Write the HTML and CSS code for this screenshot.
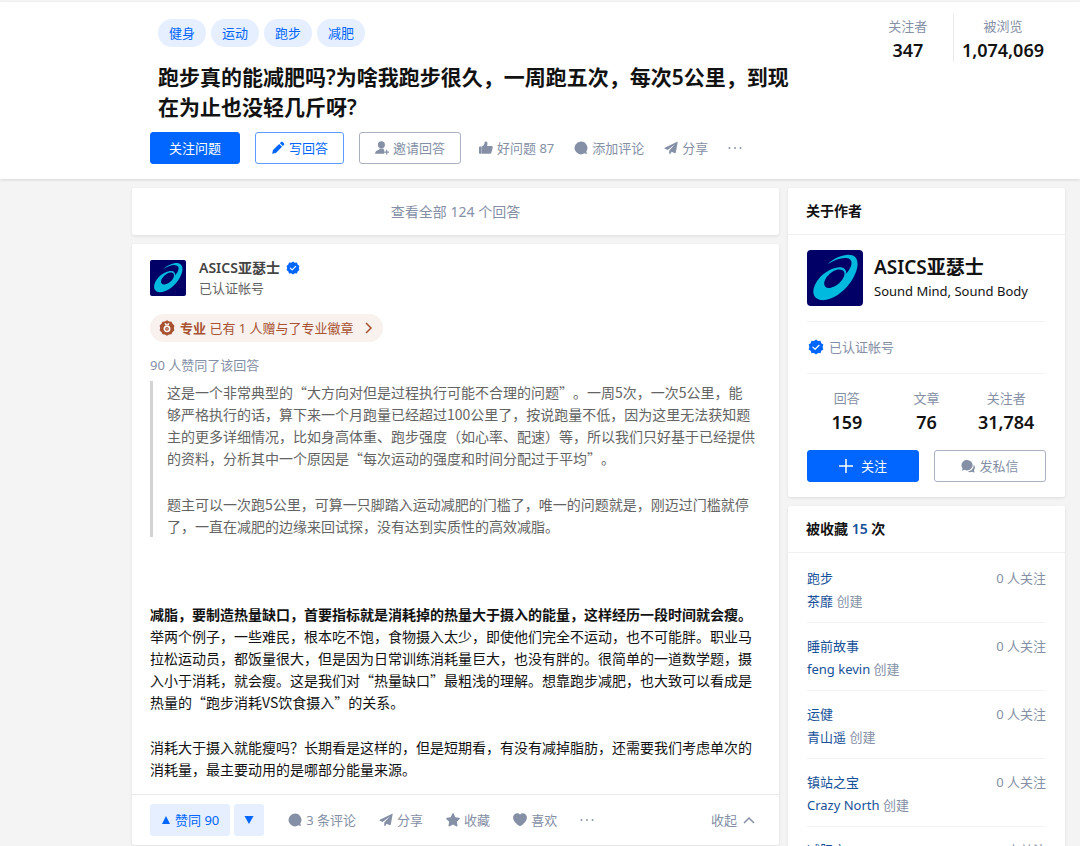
FILE: index.html
```html
<!DOCTYPE html>
<html lang="zh-CN">
<head>
<meta charset="utf-8">
<meta name="viewport" content="width=device-width, initial-scale=1">
<title>跑步真的能减肥吗?</title>
<link rel="stylesheet" href="styles.css">
</head>
<body>
<svg class="sprite" aria-hidden="true">
  <symbol id="comment" viewBox="0 0 24 24"><path d="M12 1a11 11 0 1 0 6 20.200c1.200.8 2.700 1 4 .6.600-.2.600-.7.200-1.100-.8-.8-1.100-1.700-1-2.700A11 11 0 0 0 12 1z"/></symbol>
  <symbol id="plane" viewBox="0 0 24 24"><path d="M22.600 1.200c.5-.3 1 .1.900.6l-3.400 18.500c-.1.700-.8 1-1.400.7l-5.500-2.600-2.700 3.700c-.5.700-1.500.4-1.500-.5v-5.200L18.500 6.200 6.300 15.300l-4.800-2.200c-.8-.3-.8-1.200-.1-1.600z"/></symbol>
  <symbol id="verified" viewBox="0 0 24 24"><path fill="#06f" d="M12 .8l3 2.100 3.700-.2 1.300 3.500 3 2.200L21.900 12l1.100 3.600-3 2.200-1.300 3.500-3.700-.2-3 2.100-3-2.100-3.700.2L4 17.800l-3-2.200L2.100 12 1 8.400l3-2.200 1.300-3.500 3.700.2z"/><path d="M7.300 12.200l3.300 3.200 6-6" fill="none" stroke="#fff" stroke-width="1.800" stroke-linecap="round" stroke-linejoin="round"/></symbol>
  <symbol id="asics" viewBox="0 0 168 168"><path fill="#000067" d="M0 0h168v168H0z"/><path fill="#00b9de" d="M62 42C84 22 116 10 136 16c24 9 19 45-5 80-25 36-62 58-90 54-29-5-29-38-2-68 23-25 62-38 74-25 5 6 6 10 3 16 22-24 24-46 3-49-18-2-38 7-57 18z"/><ellipse cx="82" cy="86" rx="36" ry="20" transform="rotate(-40 82 86)" fill="#000067"/></symbol>
</svg>
<div class="page">
  <header class="question">
    <div class="question-main">
      <nav class="tags"><a href="#">健身</a><a href="#">运动</a><a href="#">跑步</a><a href="#">减肥</a></nav>
      <h1>跑步真的能减肥吗?为啥我跑步很久，一周跑五次，每次5公里，到现在为止也没轻几斤呀?</h1>
      <div class="question-actions">
        <button class="btn primary">关注问题</button>
        <button class="btn outline"><svg class="icon" viewBox="0 0 24 24"><path d="M2 22l1.400-6.500L14 5l5 5L8.500 20.600zM15.300 3.700l1.900-1.900c.8-.8 2-.8 2.800 0l2.200 2.200c.8.8.8 2 0 2.800l-1.900 1.900z"/></svg>写回答</button>
        <button class="btn neutral"><svg class="icon" viewBox="0 0 24 24"><circle cx="11" cy="6.500" r="6"/><path d="M1 22c-.6 0-1-.5-.9-1.100C.8 17.500 3 16.500 6 15.400c1.300-.5 1.700-1.200 1.700-2.400h6.600c0 1.200.4 1.900 1.500 2.400v6.600zM19 15h2v3h3v2h-3v3h-2v-3h-3v-2h3z"/></svg>邀请回答</button>
        <div class="links">
          <button class="link"><svg class="icon" viewBox="0 0 24 24"><path d="M0 11c0-1 .7-1.700 1.700-1.700H4.500V22H1.700C.7 22 0 21.300 0 20.300zM5 9.300C8 8.300 9.500 6 9.500 3c0-3 4.500-3 5 .5.200 1.800-.2 3.500-.7 5h7.200c2 0 3 1.300 2.500 3.200l-2.300 8.300c-.4 1.300-1.200 2-2.500 2H5z"/></svg>好问题 87</button>
          <button class="link"><svg class="icon"><use href="#comment"/></svg>添加评论</button>
          <button class="link"><svg class="icon"><use href="#plane"/></svg>分享</button>
          <button class="link" aria-label="更多"><svg class="icon" viewBox="0 0 24 24"><circle cx="2.500" cy="12" r="1.600"/><circle cx="12" cy="12" r="1.600"/><circle cx="21.500" cy="12" r="1.600"/></svg></button>
        </div>
      </div>
    </div>
    <div class="numbers">
      <div class="number"><span>关注者</span><strong>347</strong></div>
      <div class="number"><span>被浏览</span><strong>1,074,069</strong></div>
    </div>
  </header>

  <div class="columns">
    <main class="stack">
      <a class="card view-all" href="#">查看全部 124 个回答</a>
      <article class="card answer">
        <div class="answer-body">
          <div class="author">
            <svg class="avatar" role="img" aria-label="ASICS"><use href="#asics"/></svg>
            <div>
              <div class="author-name">ASICS亚瑟士<svg class="icon"><use href="#verified"/></svg></div>
              <div class="author-note">已认证帐号</div>
            </div>
          </div>
          <button class="badge"><svg class="medal" viewBox="0 0 24 24"><path fill="#a85232" d="M12 .5l3.200 1.700 3.600.3 1.500 3.300 2.700 2.400-.7 3.800.7 3.600-2.700 2.400-1.500 3.300-3.600.3L12 23.500l-3.200-1.900-3.600-.3L3.700 18 1 15.600l.7-3.600L1 8.200l2.700-2.400 1.500-3.300 3.600-.3z"/><path d="M8.200 5h2.300L12 7.200 13.500 5h2.300l-1.600 3.400H9.800z" fill="#fff"/><circle cx="12" cy="13.300" r="4" fill="none" stroke="#fff" stroke-width="2.400"/><circle cx="12" cy="13.300" r="1" fill="#fff"/></svg><span><b>专业</b> 已有 1 人赠与了专业徽章</span><svg class="chevron" viewBox="0 0 12 12"><path d="M4 1l5 5-5 5"/></svg></button>
          <p class="voters">90 人赞同了该回答</p>
          <blockquote>
            <p>这是一个非常典型的“大方向对但是过程执行可能不合理的问题”。一周5次，一次5公里，能够严格执行的话，算下来一个月跑量已经超过100公里了，按说跑量不低，因为这里无法获知题主的更多详细情况，比如身高体重、跑步强度（如心率、配速）等，所以我们只好基于已经提供的资料，分析其中一个原因是“每次运动的强度和时间分配过于平均”。</p>
            <p>题主可以一次跑5公里，可算一只脚踏入运动减肥的门槛了，唯一的问题就是，刚迈过门槛就停了，一直在减肥的边缘来回试探，没有达到实质性的高效减脂。</p>
          </blockquote>
          <div class="prose">
            <p><b>减脂，要制造热量缺口，首要指标就是消耗掉的热量大于摄入的能量，这样经历一段时间就会瘦。</b>举两个例子，一些难民，根本吃不饱，食物摄入太少，即使他们完全不运动，也不可能胖。职业马拉松运动员，都饭量很大，但是因为日常训练消耗量巨大，也没有胖的。很简单的一道数学题，摄入小于消耗，就会瘦。这是我们对“热量缺口”最粗浅的理解。想靠跑步减肥，也大致可以看成是热量的“跑步消耗VS饮食摄入”的关系。</p>
            <p>消耗大于摄入就能瘦吗？长期看是这样的，但是短期看，有没有减掉脂肪，还需要我们考虑单次的消耗量，最主要动用的是哪部分能量来源。</p>
          </div>
        </div>
        <footer class="answer-actions">
          <div class="votes">
            <button class="vote up"><svg class="tri" viewBox="0 0 10 10"><path d="M5 1l4 8H1z"/></svg>赞同 90</button>
            <button class="vote down" aria-label="反对"><svg class="tri" viewBox="0 0 10 10"><path d="M5 9L.5 1h9z"/></svg></button>
          </div>
          <div class="links">
            <button class="link"><svg class="icon"><use href="#comment"/></svg>3 条评论</button>
            <button class="link"><svg class="icon"><use href="#plane"/></svg>分享</button>
            <button class="link"><svg class="icon" viewBox="0 0 24 24"><path d="M10.800 1.300c.5-1.100 1.900-1.100 2.400 0l2.800 5.900 6.300.9c1.300.2 1.700 1.500.8 2.400l-4.500 4.400 1.100 6.500c.2 1.200-1 2-2.100 1.500L12 19.800l-5.600 3.100c-1.100.5-2.300-.3-2.100-1.500l1.100-6.500L.9 10.500c-.9-.9-.5-2.200.8-2.400L8 7.200z"/></svg>收藏</button>
            <button class="link"><svg class="icon" viewBox="0 0 24 24"><path d="M12 3C9.500-.2 5-.1 2.400 2.500-.7 5.600-.4 10.500 2.200 14c2.200 2.800 5.400 5.900 8.300 7.900 1 .6 2 .6 3 0 2.900-2 6.100-5.100 8.300-7.900 2.600-3.500 2.900-8.400-.2-11.500C19-.1 14.500-.2 12 3z"/></svg>喜欢</button>
            <button class="link" aria-label="更多"><svg class="icon" viewBox="0 0 24 24"><circle cx="2.500" cy="12" r="1.600"/><circle cx="12" cy="12" r="1.600"/><circle cx="21.500" cy="12" r="1.600"/></svg></button>
          </div>
          <button class="link collapse">收起<svg class="chevron" viewBox="0 0 12 12"><path d="M1 9l5-5 5 5"/></svg></button>
        </footer>
      </article>
    </main>

    <aside class="stack">
      <section class="card">
        <h2>关于作者</h2>
        <div class="about">
          <div class="profile">
            <svg class="avatar large" role="img" aria-label="ASICS"><use href="#asics"/></svg>
            <div><div class="profile-name">ASICS亚瑟士</div><div class="profile-line">Sound Mind, Sound Body</div></div>
          </div>
          <div class="certified"><svg class="medal"><use href="#verified"/></svg>已认证帐号</div>
          <div class="stats">
            <div class="number"><span>回答</span><strong>159</strong></div>
            <div class="number"><span>文章</span><strong>76</strong></div>
            <div class="number"><span>关注者</span><strong>31,784</strong></div>
          </div>
          <div class="about-buttons">
            <button class="btn primary"><svg class="plus" viewBox="0 0 14 14"><path d="M7 0v14M0 7h14"/></svg>关注</button>
            <button class="btn neutral"><svg class="icon" viewBox="0 0 24 24"><path d="M10.500 1.500a9.500 9 0 0 1 0 18c-1.500 0-3-.3-4.200-1-1.200.7-2.700 1.300-4.200 1.200-.6 0-.8-.6-.4-1 .8-.8 1-1.700.8-2.700A9.300 9.300 0 0 1 10.500 1.500z"/><path d="M21.800 9.500c2.600 3 2.700 6.700.6 9.600-.3 1.200.1 2.100.8 2.900.4.500.1 1-.4 1-1.500 0-2.700-.4-3.700-1-2.600 1-5.300.8-7.600-.6 6-.6 10.500-5 10.300-11.900z"/></svg>发私信</button>
          </div>
        </div>
      </section>
      <section class="card">
        <h2>被收藏 <a href="#">15</a> 次</h2>
        <ul class="collections">
          <li><div><a href="#">跑步</a><p><a href="#">茶靡</a> 创建</p></div><span>0 人关注</span></li>
          <li><div><a href="#">睡前故事</a><p><a href="#">feng kevin</a> 创建</p></div><span>0 人关注</span></li>
          <li><div><a href="#">运健</a><p><a href="#">青山遥</a> 创建</p></div><span>0 人关注</span></li>
          <li><div><a href="#">镇站之宝</a><p><a href="#">Crazy North</a> 创建</p></div><span>0 人关注</span></li>
          <li><div><a href="#">减肥方</a></div><span>0 人关注</span></li>
        </ul>
      </section>
    </aside>
  </div>
</div>
</body>
</html>
```

FILE: styles.css
```css
* { box-sizing: border-box; }

body {
  margin: 0;
  background: #f4f4f4;
  color: #121212;
  font: 13px/22px "Noto Sans", "Noto Sans CJK SC", sans-serif;
  text-spacing-trim: space-all;
}

h1, h2, p, ul, blockquote { margin: 0; padding: 0; }
a { color: inherit; text-decoration: none; }
button { font: inherit; color: inherit; background: none; border: 0; padding: 0; cursor: pointer; }
svg { flex: none; fill: currentColor; }
.sprite { position: absolute; width: 0; height: 0; }
.icon { width: 14px; height: 14px; }
.medal { width: 16px; height: 16px; }
.chevron { width: 12px; height: 12px; fill: none; stroke: currentColor; stroke-width: 1.5; }

.page { height: 100vh; overflow: hidden; }

.question {
  display: flex;
  justify-content: space-between;
  margin-top: 2px;
  padding: 12px 28px 15px 150px;
  background: #fff;
  box-shadow: 0 1px 3px rgba(18, 18, 18, 0.12);
}
.question-main { flex: 0 1 648px; padding-top: 5px; }
.tags { display: flex; gap: 5px; padding-left: 8px; }
.tags a {
  padding: 3px 11px;
  border-radius: 14px;
  background: #e5efff;
  color: #06f;
}
h1 {
  margin: 15px 0 10px;
  padding-left: 8px;
  font-size: 21px;
  line-height: 30px;
  font-weight: 600;
}
.question-actions { display: flex; align-items: center; gap: 15px; white-space: nowrap; }
.btn {
  display: flex;
  align-items: center;
  justify-content: center;
  gap: 4px;
  height: 32px;
  padding: 0 15px;
  border: 1px solid #8590a6;
  border-radius: 3px;
}
.btn.primary { background: #06f; border-color: #06f; color: #fff; padding: 0 18px; }
.btn.outline { border-color: #5c9cff; color: #06f; }
.btn.neutral { border-color: #aab1c0; color: #8590a6; }
.links { display: flex; gap: 20px; color: #8590a6; }
.question-actions .links { margin-left: 3px; }
.link { display: flex; align-items: center; gap: 4px; color: #8590a6; }

.numbers { display: flex; align-self: flex-start; }
.number { display: flex; flex-direction: column; align-items: center; line-height: 24px; }
.number span { color: #8590a6; }
.number strong { font-size: 18px; font-weight: 600; }
.numbers .number { padding: 0 8px; min-width: 90px; }
.numbers .number + .number { border-left: 1px solid #ebebeb; }

.columns {
  display: grid;
  grid-template-columns: minmax(0, 1fr) 277px;
  align-items: start;
  gap: 9px;
  padding: 9px 15px 0 132px;
}
.stack { display: grid; gap: 9px; }
.card {
  background: #fff;
  border-radius: 2px;
  box-shadow: 0 1px 3px rgba(18, 18, 18, 0.1);
}
.view-all { padding: 12px; line-height: 23px; text-align: center; color: #8590a6; font-size: 14px; }

.answer-body { padding: 14px 18px; font-size: 14px; }
.author { display: flex; align-items: center; gap: 13px; line-height: 20px; }
.avatar { width: 36px; height: 36px; border-radius: 2px; }
.avatar.large { width: 56px; height: 56px; border-radius: 4px; }
.author-name { display: flex; align-items: center; gap: 6px; color: #444; font-weight: 600; }
.author-note { color: #646464; font-size: 13px; }
.badge {
  display: flex;
  align-items: center;
  gap: 5px;
  margin-top: 16px;
  padding: 3px 9px;
  border-radius: 14px;
  background: #f8f1ed;
  color: #a85232;
  font-size: 13px;
}
.badge .chevron { margin-left: 3px; }
.voters { margin-top: 12px; color: #8590a6; font-size: 13px; }
blockquote, .prose { font-family: "Noto Sans CJK SC", sans-serif; }
blockquote {
  margin-top: 5px;
  padding: 0 5px 0 14px;
  border-left: 3px solid #d3d3d3;
  color: #646464;
}
blockquote p + p { margin-top: 24px; }
.prose { margin-top: 66px; }
.prose p + p { margin-top: 23px; }

.answer-actions {
  display: flex;
  align-items: center;
  padding: 9px 24px 9px 18px;
  border-top: 1px solid #ebebeb;
  white-space: nowrap;
}
.votes { display: flex; gap: 4px; margin-right: 24px; }
.vote {
  display: flex;
  align-items: center;
  gap: 4px;
  height: 32px;
  padding: 0 10px;
  border-radius: 3px;
  background: #e5efff;
  color: #06f;
}
.vote.up { padding: 0 11px; }
.tri { width: 10px; height: 10px; }
.answer-actions .links { gap: 23px; }
.collapse { margin-left: auto; gap: 6px; }

h2 {
  padding: 12px 18px;
  border-bottom: 1px solid #f0f0f0;
  font-size: 14px;
  line-height: 22px;
  font-weight: 600;
}
h2 a { color: #175199; }
.about { padding: 15px 19px; }
.profile { display: flex; align-items: center; gap: 11px; padding-bottom: 15px; }
.profile-name { font-size: 19px; line-height: 26px; font-weight: 600; }
.certified {
  display: flex;
  align-items: center;
  gap: 5px;
  padding: 14px 0 15px 1px;
  border-top: 1px solid #f3f3f3;
  border-bottom: 1px solid #f3f3f3;
  color: #8590a6;
}
.stats { display: grid; grid-template-columns: repeat(3, 1fr); padding: 12px 0 16px; }
.about-buttons { display: grid; grid-template-columns: 1fr 1fr; gap: 15px; }
.about-buttons .primary { gap: 8px; }
.plus { width: 14px; height: 14px; stroke: currentColor; stroke-width: 1.5; }

.collections { padding: 2px 19px 0; list-style: none; line-height: 23px; }
.collections li {
  display: flex;
  justify-content: space-between;
  padding: 12px 0 9px;
  border-bottom: 1px solid #f3f3f3;
  color: #8590a6;
}
.collections a { color: #175199; }
```
